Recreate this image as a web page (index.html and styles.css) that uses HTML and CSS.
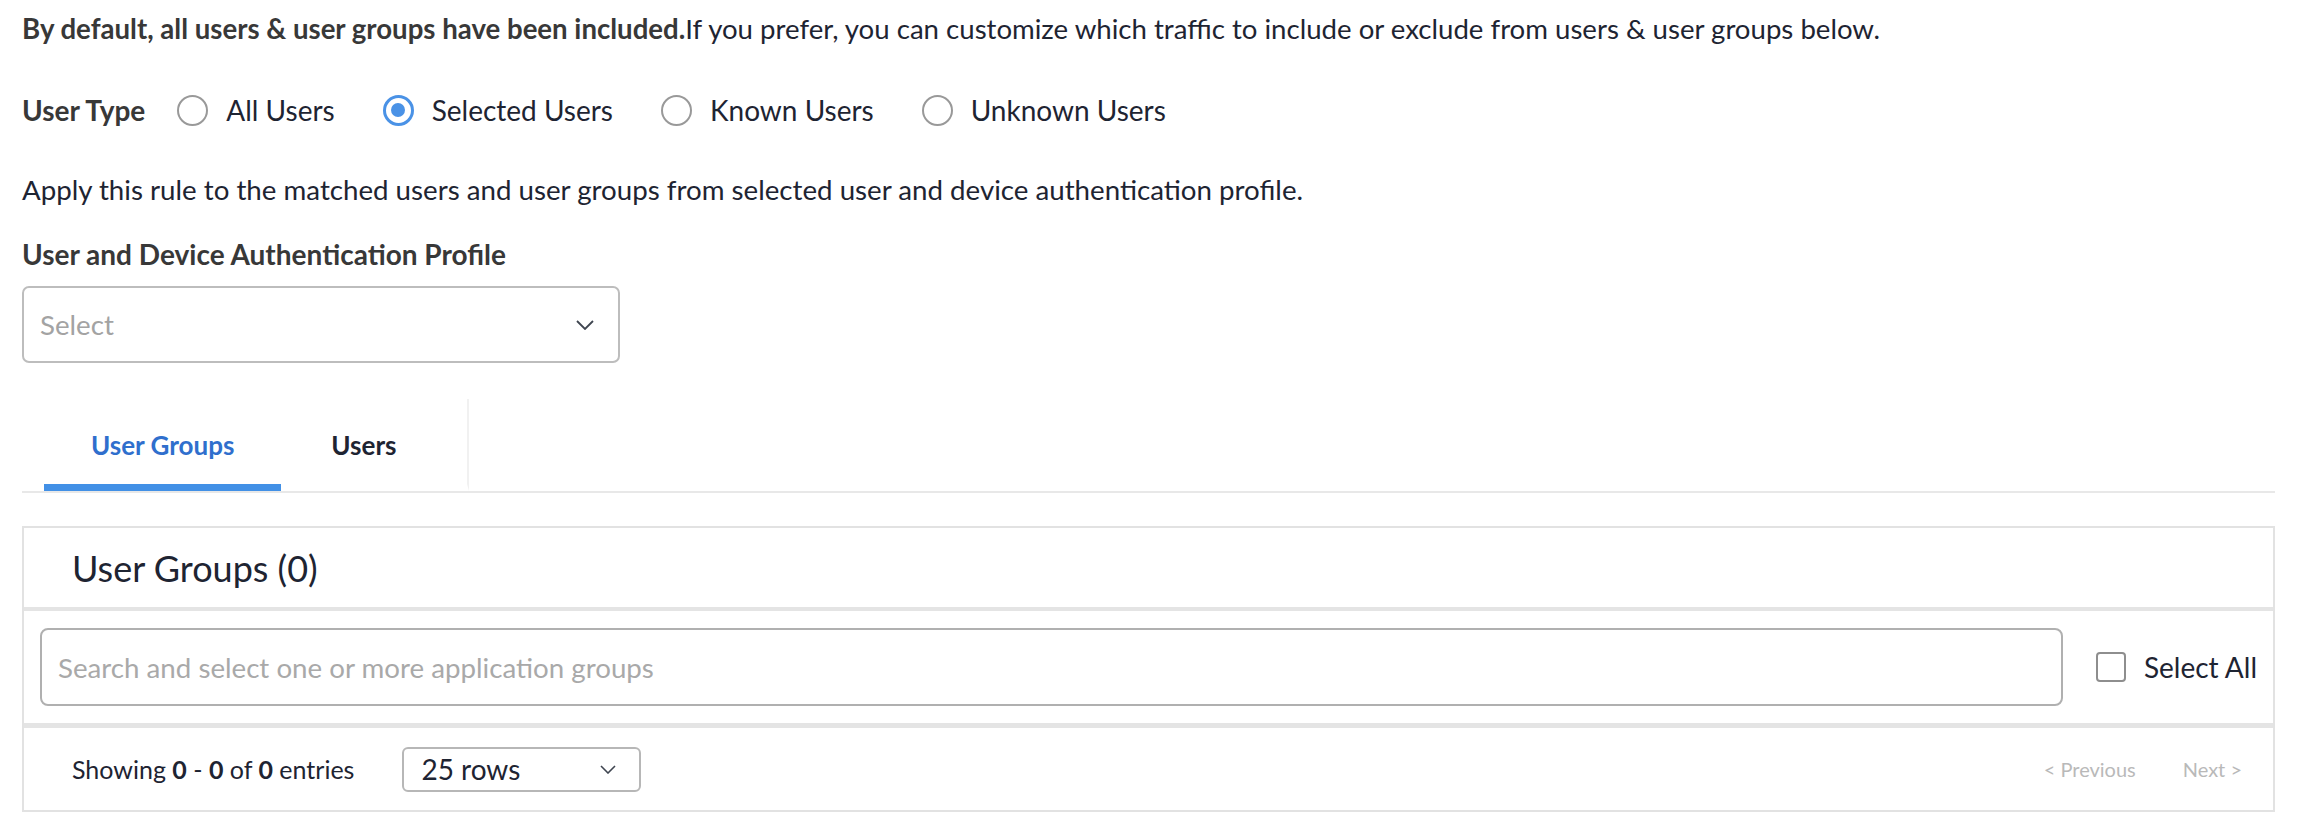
FILE: index.html
```html
<!DOCTYPE html>
<html lang="en">
<head>
<meta charset="utf-8">
<title>User Groups</title>
<link rel="stylesheet" href="styles.css">
</head>
<body>
<div class="page">
  <p class="intro"><strong>By default, all users &amp; user groups have been included.</strong>If you prefer, you can customize which traffic to include or exclude from users &amp; user groups below.</p>

  <div class="user-type">
    <span class="field-label">User Type</span>
    <label class="radio"><span class="radio-dot"></span><span>All Users</span></label>
    <label class="radio"><span class="radio-dot checked"></span><span>Selected Users</span></label>
    <label class="radio"><span class="radio-dot"></span><span>Known Users</span></label>
    <label class="radio"><span class="radio-dot"></span><span>Unknown Users</span></label>
  </div>

  <p class="apply">Apply this rule to the matched users and user groups from selected user and device authentication profile.</p>

  <div class="profile-label">User and Device Authentication Profile</div>
  <div class="select-box">
    <span class="placeholder">Select</span>
    <svg class="chevron" width="18" height="10" viewBox="0 0 18 10"><polyline points="1,1 9,9 17,1" fill="none" stroke="#3f4550" stroke-width="1.8"/></svg>
  </div>

  <div class="tabs">
    <div class="tab active">User Groups</div>
    <div class="tab last">Users</div>
  </div>

  <div class="panel">
    <div class="panel-header">User Groups (0)</div>
    <div class="search-row">
      <div class="search-input">Search and select one or more application groups</div>
      <label class="select-all"><span class="checkbox"></span><span>Select All</span></label>
    </div>
    <div class="panel-footer">
      <div class="footer-left">
        <span class="showing">Showing <b>0</b> - <b>0</b> of <b>0</b> entries</span>
        <div class="rows-select">
          <span>25 rows</span>
          <svg class="chevron small" width="16" height="9" viewBox="0 0 16 9"><polyline points="1,1 8,8 15,1" fill="none" stroke="#3f4550" stroke-width="1.6"/></svg>
        </div>
      </div>
      <div class="pager">
        <span>&lt; Previous</span>
        <span>Next &gt;</span>
      </div>
    </div>
  </div>
</div>
</body>
</html>
```

FILE: styles.css
```css
* { box-sizing: border-box; }
html, body { margin: 0; padding: 0; background: #fff; }
body {
  font-family: Lato, "Open Sans", sans-serif;
  color: #1e2432;
  font-size: 28px;
}
.page { padding: 11px 23px 0 22px; }

.intro { margin: 0; line-height: 36px; font-size: 27.6px; }
.intro strong { color: #383838; font-weight: 700; }

.user-type {
  margin-top: 45px;
  display: flex;
  align-items: center;
  height: 36px;
}
.field-label { color: #383838; font-weight: 700; margin-right: 32px; }
.radio { display: flex; align-items: center; margin-right: 48px; }
.radio-dot {
  width: 31px; height: 31px;
  border: 2.5px solid #999999;
  border-radius: 50%;
  margin-right: 18px;
  position: relative;
}
.radio-dot.checked { border: 3px solid #4a92e6; }
.radio-dot.checked::after {
  content: "";
  position: absolute;
  left: 5.5px; top: 5.5px;
  width: 14px; height: 14px;
  border-radius: 50%;
  background: #4a92e6;
}

.apply { margin: 44px 0 0; line-height: 36px; font-size: 27.7px; }

.profile-label { margin-top: 28px; line-height: 36px; color: #383838; font-weight: 700; }

.select-box {
  margin-top: 14px;
  width: 598px; height: 77px;
  border: 2px solid #bdbdbd;
  border-radius: 7px;
  display: flex; align-items: center; justify-content: space-between;
  padding: 0 24px 0 16px;
}
.placeholder { color: #a3a3a3; font-size: 27.7px; }

.tabs {
  margin-top: 36px;
  display: flex;
  border-bottom: 2px solid #e8e8e8;
  padding-left: 22px;
  height: 94px;
}
.tab {
  display: flex; align-items: center; justify-content: center;
  font-size: 26px; font-weight: 700;
  color: #1e2432;
  padding: 7px 47px 0;
  border-bottom: 7px solid transparent;
}
.tab.active { color: #2f6fcd; border-bottom-color: #4290e6; }
.tab.last { padding: 7px 71px 0 50px; border-right: 2px solid #f1f1f1; }

.panel {
  margin-top: 33px;
  border: 2px solid #e2e2e2;
}
.panel-header {
  height: 83px;
  display: flex; align-items: center;
  padding-left: 48px;
  font-size: 36px;
  border-bottom: 4px solid #e4e4e4;
}
.search-row {
  display: flex; align-items: center;
  padding: 17px 16px;
  border-bottom: 5px solid #e4e4e4;
  gap: 33px;
}
.search-input {
  flex: 1;
  height: 78px;
  border: 2px solid #b0b0b0;
  border-radius: 8px;
  display: flex; align-items: center;
  padding-left: 16px;
  color: #a9a9a9;
  font-size: 27.7px;
}
.select-all { display: flex; align-items: center; }
.checkbox {
  width: 30px; height: 30px;
  border: 2px solid #8e8e8e;
  border-radius: 4px;
  margin-right: 18px;
}
.panel-footer {
  height: 82px;
  display: flex; align-items: center; justify-content: space-between;
  padding: 0 31px 0 48px;
}
.footer-left { display: flex; align-items: center; }
.showing { font-size: 25px; }
.showing b { font-weight: 700; }
.rows-select {
  margin-left: 48px;
  width: 239px; height: 45px;
  border: 2px solid #b7b7b7;
  border-radius: 6px;
  display: flex; align-items: center; justify-content: space-between;
  padding: 0 23px 0 17px;
  font-size: 28px;
}
.pager { display: flex; gap: 47px; color: #b9b9b9; font-size: 20px; }
```
